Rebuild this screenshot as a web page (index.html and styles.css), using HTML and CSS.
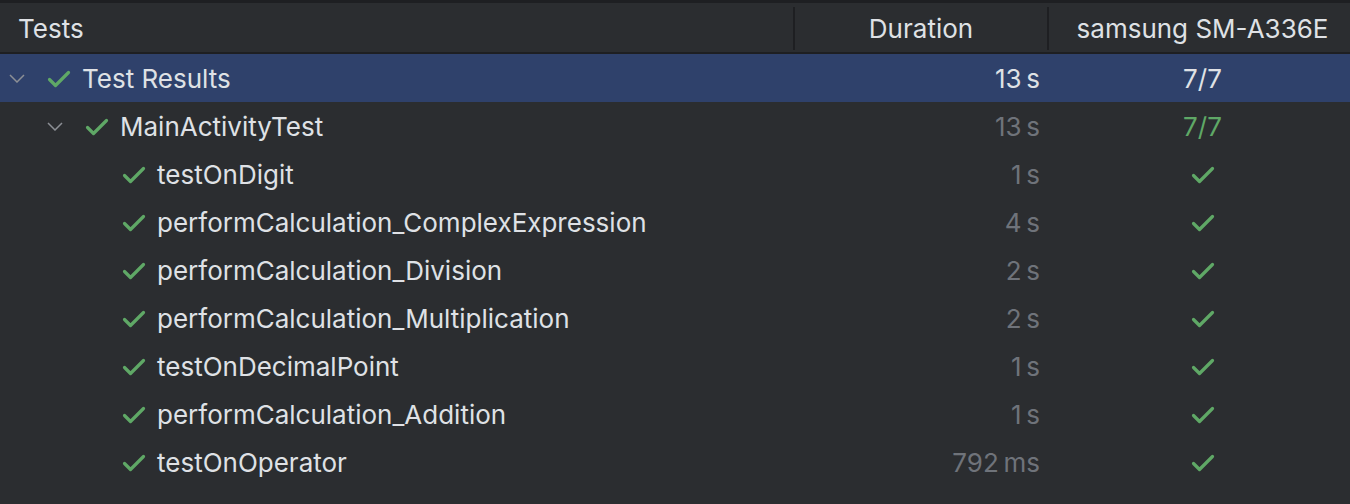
FILE: index.html
```html
<!DOCTYPE html>
<html>
<head>
<meta charset="utf-8">
<link rel="stylesheet" href="styles.css">
</head>
<body>
<div class="panel">
  <div class="header">
    <div class="hcell tests">Tests</div>
    <div class="hcell center">Duration</div>
    <div class="hcell center last">samsung SM-A336E</div>
  </div>
  <div class="rows">
    <div class="row selected">
      <div class="name lvl0">
        <svg class="chev" viewBox="0 0 16 9"><path d="M1 1 L8 8 L15 1" fill="none" stroke="#8c8f95" stroke-width="1.5"/></svg>
        <svg class="check" viewBox="0 0 24 18"><path d="M2.5 9.5 L8.5 15.5 L21.5 2.5" fill="none" stroke="#5fa866" stroke-width="3.2" stroke-linecap="round" stroke-linejoin="round"/></svg>
        <span>Test Results</span>
      </div>
      <div class="dur strong">13&#8239;s</div>
      <div class="dev strong">7/7</div>
    </div>
    <div class="row">
      <div class="name lvl1">
        <svg class="chev" viewBox="0 0 16 9"><path d="M1 1 L8 8 L15 1" fill="none" stroke="#8c8f95" stroke-width="1.5"/></svg>
        <svg class="check" viewBox="0 0 24 18"><path d="M2.5 9.5 L8.5 15.5 L21.5 2.5" fill="none" stroke="#5fa866" stroke-width="3.2" stroke-linecap="round" stroke-linejoin="round"/></svg>
        <span>MainActivityTest</span>
      </div>
      <div class="dur">13&#8239;s</div>
      <div class="dev green">7/7</div>
    </div>
    <div class="row">
      <div class="name lvl2">
        <svg class="check" viewBox="0 0 24 18"><path d="M2.5 9.5 L8.5 15.5 L21.5 2.5" fill="none" stroke="#5fa866" stroke-width="3.2" stroke-linecap="round" stroke-linejoin="round"/></svg>
        <span>testOnDigit</span>
      </div>
      <div class="dur">1&#8239;s</div>
      <div class="dev"><svg class="check" viewBox="0 0 24 18"><path d="M2.5 9.5 L8.5 15.5 L21.5 2.5" fill="none" stroke="#5fa866" stroke-width="3.2" stroke-linecap="round" stroke-linejoin="round"/></svg></div>
    </div>
    <div class="row">
      <div class="name lvl2">
        <svg class="check" viewBox="0 0 24 18"><path d="M2.5 9.5 L8.5 15.5 L21.5 2.5" fill="none" stroke="#5fa866" stroke-width="3.2" stroke-linecap="round" stroke-linejoin="round"/></svg>
        <span>performCalculation_ComplexExpression</span>
      </div>
      <div class="dur">4&#8239;s</div>
      <div class="dev"><svg class="check" viewBox="0 0 24 18"><path d="M2.5 9.5 L8.5 15.5 L21.5 2.5" fill="none" stroke="#5fa866" stroke-width="3.2" stroke-linecap="round" stroke-linejoin="round"/></svg></div>
    </div>
    <div class="row">
      <div class="name lvl2">
        <svg class="check" viewBox="0 0 24 18"><path d="M2.5 9.5 L8.5 15.5 L21.5 2.5" fill="none" stroke="#5fa866" stroke-width="3.2" stroke-linecap="round" stroke-linejoin="round"/></svg>
        <span>performCalculation_Division</span>
      </div>
      <div class="dur">2&#8239;s</div>
      <div class="dev"><svg class="check" viewBox="0 0 24 18"><path d="M2.5 9.5 L8.5 15.5 L21.5 2.5" fill="none" stroke="#5fa866" stroke-width="3.2" stroke-linecap="round" stroke-linejoin="round"/></svg></div>
    </div>
    <div class="row">
      <div class="name lvl2">
        <svg class="check" viewBox="0 0 24 18"><path d="M2.5 9.5 L8.5 15.5 L21.5 2.5" fill="none" stroke="#5fa866" stroke-width="3.2" stroke-linecap="round" stroke-linejoin="round"/></svg>
        <span>performCalculation_Multiplication</span>
      </div>
      <div class="dur">2&#8239;s</div>
      <div class="dev"><svg class="check" viewBox="0 0 24 18"><path d="M2.5 9.5 L8.5 15.5 L21.5 2.5" fill="none" stroke="#5fa866" stroke-width="3.2" stroke-linecap="round" stroke-linejoin="round"/></svg></div>
    </div>
    <div class="row">
      <div class="name lvl2">
        <svg class="check" viewBox="0 0 24 18"><path d="M2.5 9.5 L8.5 15.5 L21.5 2.5" fill="none" stroke="#5fa866" stroke-width="3.2" stroke-linecap="round" stroke-linejoin="round"/></svg>
        <span>testOnDecimalPoint</span>
      </div>
      <div class="dur">1&#8239;s</div>
      <div class="dev"><svg class="check" viewBox="0 0 24 18"><path d="M2.5 9.5 L8.5 15.5 L21.5 2.5" fill="none" stroke="#5fa866" stroke-width="3.2" stroke-linecap="round" stroke-linejoin="round"/></svg></div>
    </div>
    <div class="row">
      <div class="name lvl2">
        <svg class="check" viewBox="0 0 24 18"><path d="M2.5 9.5 L8.5 15.5 L21.5 2.5" fill="none" stroke="#5fa866" stroke-width="3.2" stroke-linecap="round" stroke-linejoin="round"/></svg>
        <span>performCalculation_Addition</span>
      </div>
      <div class="dur">1&#8239;s</div>
      <div class="dev"><svg class="check" viewBox="0 0 24 18"><path d="M2.5 9.5 L8.5 15.5 L21.5 2.5" fill="none" stroke="#5fa866" stroke-width="3.2" stroke-linecap="round" stroke-linejoin="round"/></svg></div>
    </div>
    <div class="row">
      <div class="name lvl2">
        <svg class="check" viewBox="0 0 24 18"><path d="M2.5 9.5 L8.5 15.5 L21.5 2.5" fill="none" stroke="#5fa866" stroke-width="3.2" stroke-linecap="round" stroke-linejoin="round"/></svg>
        <span>testOnOperator</span>
      </div>
      <div class="dur">792&#8239;ms</div>
      <div class="dev"><svg class="check" viewBox="0 0 24 18"><path d="M2.5 9.5 L8.5 15.5 L21.5 2.5" fill="none" stroke="#5fa866" stroke-width="3.2" stroke-linecap="round" stroke-linejoin="round"/></svg></div>
    </div>
  </div>
</div>
</body>
</html>
```

FILE: styles.css
```css
html, body {
  margin: 0;
  padding: 0;
  background: #2b2d30;
}
body {
  font-family: Inter, "Noto Sans", sans-serif;
  font-size: 26px;
  color: #dfe1e5;
  width: 1350px;
  height: 504px;
  overflow: hidden;
}
.panel {
  border-top: 3px solid #1e1f22;
}
.header {
  display: grid;
  grid-template-columns: 795px 254px 1fr;
  height: 49px;
  border-bottom: 2px solid #1e1f22;
}
.hcell {
  display: flex;
  align-items: center;
  padding: 0 18px;
  border-right: 2px solid #1e1f22;
  margin: 4px 0 2px;
  padding-bottom: 1px;
}
.hcell.center {
  justify-content: center;
}
.hcell.last {
  border-right: none;
  padding-left: 24px;
}
.rows {
  display: flex;
  flex-direction: column;
}
.row {
  display: grid;
  grid-template-columns: 795px 254px 1fr;
  height: 48px;
  align-items: center;
  padding-top: 1px;
  box-sizing: border-box;
}
.row.selected {
  background: #2f416b;
}
.name {
  display: flex;
  align-items: center;
}
.lvl0 { padding-left: 9px; }
.lvl1 { padding-left: 47px; }
.lvl2 { padding-left: 122px; }
.chev {
  width: 16px;
  height: 9px;
  margin-right: 22px;
  flex: none;
}
.check {
  width: 24px;
  height: 18px;
  margin-right: 11px;
  flex: none;
}
.dur {
  text-align: right;
  padding-right: 9px;
  color: #6f737a;
}
.dur.strong, .dev.strong {
  color: #dfe1e5;
}
.dev {
  display: flex;
  justify-content: center;
  padding-left: 6px;
}
.dev .check {
  margin: 0;
}
.dev.green {
  color: #5fa866;
}
```
